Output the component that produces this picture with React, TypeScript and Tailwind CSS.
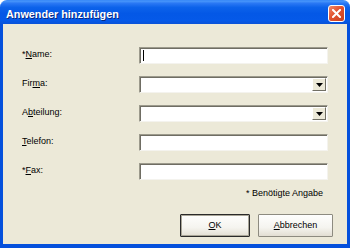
import React from "react";

const font = { fontFamily: '"Liberation Sans", Arial, sans-serif' };

function Field({ combo, cursor }: { combo?: boolean; cursor?: boolean }) {
  return (
    <div className="relative h-[17px] w-[189px] bg-white border-t border-l border-t-[#9c9a8c] border-l-[#9c9a8c] border-b border-r border-b-[#f4f3ee] border-r-[#f4f3ee] shadow-[inset_1px_1px_0_#6f6d63]">
      {cursor && <div className="absolute left-[3px] top-[2px] h-[11px] w-px bg-black" />}
      {combo && (
        <div className="absolute right-[1px] top-[1px] bottom-[1px] w-[14px] bg-[#ece9d8] border-t border-l border-t-white border-l-white border-b border-r border-b-[#716f64] border-r-[#716f64] flex items-center justify-center">
          <svg width="7" height="4" viewBox="0 0 7 4">
            <path d="M0 0H7L3.5 4Z" fill="#000" />
          </svg>
        </div>
      )}
    </div>
  );
}

function Row({ label, combo, cursor }: { label: React.ReactNode; combo?: boolean; cursor?: boolean }) {
  return (
    <div className="flex items-center h-[17px]">
      <div className="w-[117px] text-[9px] text-black leading-none -mt-[2px]">{label}</div>
      <Field combo={combo} cursor={cursor} />
    </div>
  );
}

export default function App() {
  return (
    <div className="w-[350px] h-[248px] bg-white flex flex-col" style={font}>
      <div className="h-[24px] rounded-t-[7px] bg-[linear-gradient(180deg,#4a98fb_0%,#2a78f4_10%,#0c62ea_28%,#0458e6_55%,#0559e8_85%,#0a52d8_100%)] border-t border-t-[#3c8cf8] flex items-center pl-[6px] pr-[4px]">
        <span className="text-white font-bold text-[10.8px] mt-[3px] [text-shadow:1px_1px_0_#0a2a80] flex-1">
          Anwender hinzufügen
        </span>
        <div className="w-[17px] h-[17px] mt-[2px] mr-[1px] rounded-[3px] border border-white bg-[linear-gradient(135deg,#f08a6a_0%,#e2522f_45%,#c8401f_100%)] flex items-center justify-center">
          <svg width="9" height="9" viewBox="0 0 9 9">
            <path d="M1 1L8 8M8 1L1 8" stroke="#fff" strokeWidth="2" strokeLinecap="square" />
          </svg>
        </div>
      </div>
      <div className="flex-1 flex flex-col border-l-[3px] border-r-[3px] border-b-[4px] border-[#0550dc] bg-[#ece9d8] pl-[19px]">
        <div className="flex flex-col gap-[12px] pt-[23px]">
          <Row label={<>*<u>N</u>ame:</>} cursor />
          <Row label={<>Fir<u>m</u>a:</>} combo />
          <Row label={<>A<u>b</u>teilung:</>} combo />
          <Row label={<><u>T</u>elefon:</>} />
          <Row label={<>*<u>F</u>ax:</>} />
        </div>
        <div className="flex justify-end pr-[24px] mt-[9px] text-[9px] leading-none text-black">
          * Benötigte Angabe
        </div>
        <div className="flex gap-[8px] pl-[158px] mt-[16px]">
          <div className="w-[70px] h-[23px] rounded-[1px] border border-[#2a2a2a] bg-[linear-gradient(180deg,#fefefd_0%,#f5f4ef_60%,#e2ded2_100%)] shadow-[inset_0_0_0_1px_#a8a597] flex items-center justify-center text-[9px] text-black">
            <span><u>O</u>K</span>
          </div>
          <div className="w-[75px] h-[23px] rounded-[1px] border border-[#8d8b80] bg-[linear-gradient(180deg,#fefefd_0%,#f5f4ef_60%,#e2ded2_100%)] flex items-center justify-center text-[9px] text-black">
            <span><u>A</u>bbrechen</span>
          </div>
        </div>
      </div>
    </div>
  );
}
